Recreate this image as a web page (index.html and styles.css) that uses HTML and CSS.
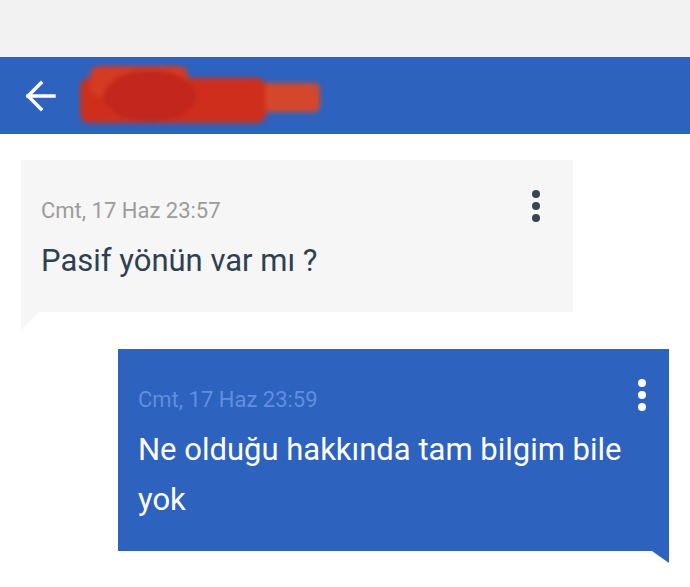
FILE: index.html
```html
<!DOCTYPE html>
<html lang="tr">
<head>
  <meta charset="UTF-8">
  <meta name="viewport" content="width=device-width, initial-scale=1.0">
  <title>Mesajlar</title>
  <link rel="stylesheet" href="styles.css">
</head>
<body>
  <div class="status-bar"></div>
  <header class="toolbar">
    <button class="back" aria-label="Geri">
      <svg width="34" height="32" viewBox="0 0 34 32">
        <path d="M31 16H5 M18 3 L5 16 L18 29" fill="none" stroke="#fff" stroke-width="3.4" stroke-linecap="square"/>
      </svg>
    </button>
    <!-- hidden contact name -->
    <svg class="name-mask" width="250" height="64" viewBox="0 0 250 64">
      <defs>
        <filter id="smear" x="-10%" y="-20%" width="120%" height="140%">
          <feGaussianBlur stdDeviation="2.8"/>
        </filter>
      </defs>
      <g filter="url(#smear)">
        <rect x="180" y="19" width="62" height="29" rx="6" fill="#d5462b"/>
        <rect x="2" y="14" width="186" height="45" rx="9" fill="#cf2f1f"/>
        <rect x="12" y="2" width="98" height="30" rx="9" fill="#d43a22"/>
        <ellipse cx="72" cy="32" rx="46" ry="26" fill="#c2281c"/>
      </g>
    </svg>
  </header>

  <main class="thread">
    <div class="bubble incoming">
      <div class="time">Cmt, 17 Haz 23:57</div>
      <div class="text">Pasif yönün var mı ?</div>
      <span class="menu"><i></i><i></i><i></i></span>
    </div>
    <div class="bubble outgoing">
      <div class="time">Cmt, 17 Haz 23:59</div>
      <div class="text">Ne olduğu hakkında tam bilgim bile yok</div>
      <span class="menu"><i></i><i></i><i></i></span>
    </div>
  </main>
</body>
</html>
```

FILE: styles.css
```css
body {
  font-family: Roboto, "Noto Sans", sans-serif;
  background-color: #fff;
  margin: 0;
  padding: 0;
}
.status-bar {
  height: 57px;
  background-color: #f2f2f2;
}
.toolbar {
  height: 77px;
  background-color: #2d62be;
  display: flex;
  align-items: center;
}
.back {
  background: none;
  border: none;
  padding: 0;
  margin-left: 23px;
  width: 34px;
  height: 32px;
  display: flex;
}
.name-mask {
  margin-left: 21px;
}
.thread {
  padding: 26px 21px;
  display: flex;
  flex-direction: column;
  gap: 37px;
}
.bubble {
  position: relative;
  padding: 26px 20px 26px;
}
.bubble::after {
  content: "";
  position: absolute;
  top: 100%;
}
.incoming {
  width: 552px;
  box-sizing: border-box;
  background-color: #f6f6f6;
}
.incoming::after {
  left: 0;
  border-top: 18px solid #f6f6f6;
  border-right: 18px solid transparent;
}
.outgoing {
  width: 551px;
  box-sizing: border-box;
  margin-left: 97px;
  background-color: #2d62be;
}
.outgoing::after {
  right: 0;
  border-top: 12px solid #2d62be;
  border-left: 17px solid transparent;
}
.time {
  font-size: 22px;
  line-height: 50px;
  color: #9c9c9c;
}
.text {
  font-size: 31px;
  line-height: 50px;
  color: #2e4052;
}
.outgoing .time {
  color: #5f8fe0;
}
.outgoing .text {
  color: #fff;
}
.menu {
  position: absolute;
  top: 30px;
  display: flex;
  flex-direction: column;
  gap: 4px;
}
.menu i {
  width: 8px;
  height: 8px;
  border-radius: 50%;
  background-color: #36474f;
}
.incoming .menu {
  right: 33px;
}
.outgoing .menu {
  right: 23px;
}
.outgoing .menu i {
  background-color: #fff;
}
```
